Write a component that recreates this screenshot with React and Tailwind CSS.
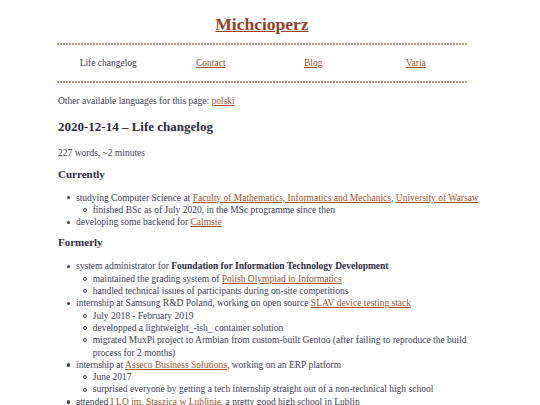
import React from "react";

const A = ({ children }) => (
  <a href="#" className="text-[#a0522d] underline decoration-[#a0522d] underline-offset-[1px]">
    {children}
  </a>
);

const Dot = () => (
  <div className="w-[19px] h-[12.3px] shrink-0 flex items-center justify-end pr-[6px]">
    <div className="w-[3.5px] h-[3.5px] rounded-full bg-[#3d3d4d]" />
  </div>
);

const Circ = () => (
  <div className="w-[16.7px] h-[12.3px] shrink-0 flex items-center justify-end pr-[5.5px]">
    <div className="w-[4px] h-[4px] rounded-full border border-[#3d3d4d]" />
  </div>
);

const Li = ({ children, sub }) => (
  <li className="flex">
    <Dot />
    <div>
      <div>{children}</div>
      {sub && <ul>{sub}</ul>}
    </div>
  </li>
);

const Sub = ({ children }) => (
  <li className="flex">
    <Circ />
    <div>{children}</div>
  </li>
);

const Dash = () => (
  <div className="h-[2px] w-full bg-[repeating-linear-gradient(90deg,#c0937a_0_2px,transparent_2px_3px)]" />
);

export default function App() {
  return (
    <div
      className="w-[540px] h-[405px] overflow-hidden bg-white text-[#3d3d4d] text-[9.5px] leading-[12.3px]"
      style={{ fontFamily: '"Liberation Serif", serif' }}
    >
      <div className="ml-[57px] w-[410px]">
        <div className="pt-[13px] h-[35px] text-center">
          <a href="#" className="text-[17.5px] leading-[22px] font-bold text-[#96401f] underline decoration-[#96401f]">
            Michcioperz
          </a>
        </div>
        <div className="mt-[8px]">
          <Dash />
        </div>
        <nav className="grid grid-cols-4 h-[36px] items-center text-center text-[9.5px]">
          <span>Life changelog</span>
          <span><A>Contact</A></span>
          <span><A>Blog</A></span>
          <span><A>Varia</A></span>
        </nav>
        <Dash />
      </div>
      <div className="ml-[58px] w-[440px]">
        <p className="mt-[12px]">
          Other available languages for this page: <A>polski</A>
        </p>
        <h1 className="mt-[11px] text-[13px] leading-[18px] font-bold text-[#2b2b3b]">
          2020-12-14 – Life changelog
        </h1>
        <p className="mt-[11px]">227 words, ~2 minutes</p>
        <h2 className="mt-[6px] text-[11px] leading-[16px] font-bold text-[#2b2b3b]">Currently</h2>
        <ul className="mt-[10px] -ml-[1px]">
          <Li
            sub={<Sub>finished BSc as of July 2020, in the MSc programme since then</Sub>}
          >
            studying Computer Science at <A>Faculty of Mathematics, Informatics and Mechanics</A>,{" "}
            <A>University of Warsaw</A>
          </Li>
          <Li>
            developing some backend for <A>Calmsie</A>
          </Li>
        </ul>
        <h2 className="mt-[6px] text-[11px] leading-[16px] font-bold text-[#2b2b3b]">Formerly</h2>
        <ul className="mt-[10px] -ml-[1px]">
          <Li
            sub={
              <>
                <Sub>
                  maintained the grading system of <A>Polish Olympiad in Informatics</A>
                </Sub>
                <Sub>handled technical issues of participants during on-site competitions</Sub>
              </>
            }
          >
            system administrator for{" "}
            <b className="font-bold text-[#2b2b3b]">Foundation for Information Technology Development</b>
          </Li>
          <Li
            sub={
              <>
                <Sub>July 2018 - February 2019</Sub>
                <Sub>developped a lightweight_-ish_ container solution</Sub>
                <Sub>
                  migrated MuxPi project to Armbian from custom-built Gentoo (after failing to reproduce the build
                  <br />
                  process for 2 months)
                </Sub>
              </>
            }
          >
            internship at Samsung R&amp;D Poland, working on open source <A>SLAV device testing stack</A>
          </Li>
          <Li
            sub={
              <>
                <Sub>June 2017</Sub>
                <Sub>surprised everyone by getting a tech internship straight out of a non-technical high school</Sub>
              </>
            }
          >
            internship at <A>Asseco Business Solutions</A>, working on an ERP platform
          </Li>
          <Li>
            attended <A>I LO im. Staszica w Lublinie</A>, a pretty good high school in Lublin
          </Li>
        </ul>
      </div>
    </div>
  );
}
